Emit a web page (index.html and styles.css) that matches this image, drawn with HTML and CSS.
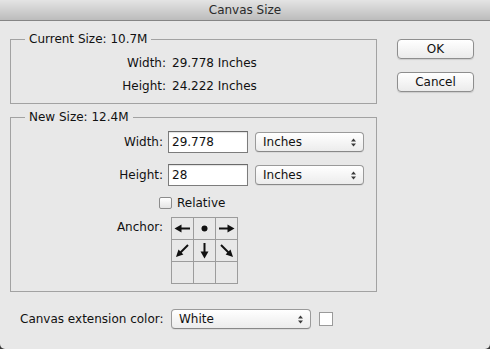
FILE: index.html
```html
<!DOCTYPE html>
<html>
<head>
<meta charset="utf-8">
<title>Canvas Size</title>
<link rel="stylesheet" href="styles.css">
</head>
<body>
<div class="window">
  <div class="titlebar">Canvas Size</div>
  <div class="content">
    <div class="main">
      <div class="left">
        <fieldset class="group group-current">
          <legend>Current Size: 10.7M</legend>
          <div class="info-grid">
            <span class="lbl">Width:</span><span>29.778 Inches</span>
            <span class="lbl">Height:</span><span>24.222 Inches</span>
          </div>
        </fieldset>
        <fieldset class="group group-new">
          <legend>New Size: 12.4M</legend>
          <div class="form-grid">
            <span class="lbl">Width:</span>
            <div class="field-row">
              <div class="textbox">29.778</div>
              <div class="popup unit"><span>Inches</span>
                <svg class="updown" width="5" height="9" viewBox="0 0 5 9"><polygon points="0,3.5 2.5,0.5 5,3.5"/><polygon points="0,5.5 2.5,8.5 5,5.5"/></svg>
              </div>
            </div>
            <span class="lbl">Height:</span>
            <div class="field-row">
              <div class="textbox">28</div>
              <div class="popup unit"><span>Inches</span>
                <svg class="updown" width="5" height="9" viewBox="0 0 5 9"><polygon points="0,3.5 2.5,0.5 5,3.5"/><polygon points="0,5.5 2.5,8.5 5,5.5"/></svg>
              </div>
            </div>
          </div>
          <div class="relative-row"><span class="checkbox"></span><span>Relative</span></div>
          <div class="anchor-row">
            <span class="lbl">Anchor:</span>
            <div class="anchor-grid">
              <div class="cell"><svg width="21" height="21" viewBox="0 0 21 21"><polygon points="2.5,10.5 9.5,6.5 9.5,14.5"/><rect x="9" y="9.5" width="9" height="2"/></svg></div>
              <div class="cell"><svg width="21" height="21" viewBox="0 0 21 21"><circle cx="10.5" cy="10.5" r="3"/></svg></div>
              <div class="cell"><svg width="21" height="21" viewBox="0 0 21 21"><polygon points="18.5,10.5 11.5,6.5 11.5,14.5"/><rect x="3" y="9.5" width="9" height="2"/></svg></div>
              <div class="cell"><svg width="21" height="21" viewBox="0 0 21 21"><polygon points="4,17 11.4,14.5 6.5,9.6"/><line x1="16" y1="5" x2="8.5" y2="12.5" stroke="#111" stroke-width="2"/></svg></div>
              <div class="cell"><svg width="21" height="21" viewBox="0 0 21 21"><rect x="9.5" y="3" width="2" height="10"/><polygon points="10.5,18.5 6.5,11.5 14.5,11.5"/></svg></div>
              <div class="cell"><svg width="21" height="21" viewBox="0 0 21 21"><polygon points="17,17 9.6,14.5 14.5,9.6"/><line x1="5" y1="5" x2="12.5" y2="12.5" stroke="#111" stroke-width="2"/></svg></div>
              <div class="cell"></div>
              <div class="cell"></div>
              <div class="cell"></div>
            </div>
          </div>
        </fieldset>
      </div>
      <div class="buttons">
        <div class="btn">OK</div>
        <div class="btn">Cancel</div>
      </div>
    </div>
    <div class="ext-row">
      <span class="ext-label">Canvas extension color:</span>
      <div class="popup ext-popup"><span>White</span>
        <svg class="updown" width="5" height="9" viewBox="0 0 5 9"><polygon points="0,3.5 2.5,0.5 5,3.5"/><polygon points="0,5.5 2.5,8.5 5,5.5"/></svg>
      </div>
      <span class="swatch"></span>
    </div>
  </div>
</div>
</body>
</html>
```
FILE: styles.css
```css
html, body {
  margin: 0;
  background: #3a3a3a;
}
body {
  font-family: "DejaVu Sans", sans-serif;
  font-size: 12px;
  color: #111;
}
.window {
  width: 490px;
  height: 349px;
  background: #e8e8e8;
  border-radius: 0 0 5px 5px;
  overflow: hidden;
}
.titlebar {
  height: 20px;
  border-bottom: 1px solid #858585;
  background: linear-gradient(#e4e4e4, #bcbcbc);
  text-align: center;
  line-height: 21px;
  color: #2a2a2a;
}
.content {
  padding-left: 10px;
}
.main {
  display: flex;
  gap: 20px;
}
.left {
  width: 367px;
  display: flex;
  flex-direction: column;
}
fieldset.group {
  margin: 0;
  border: 1px solid #a2a2a2;
  min-width: 0;
}
legend {
  margin-left: 14px;
  padding: 0 4px;
  line-height: 15px;
}
.group-current {
  margin-top: 11px !important;
  padding: 4px 0 6px;
}
.info-grid {
  display: grid;
  grid-template-columns: 155px auto;
  column-gap: 6px;
  grid-auto-rows: 23px;
  align-items: center;
}
.lbl {
  text-align: right;
}
.group-new {
  margin-top: 6px !important;
  padding: 6px 0 7px;
}
.form-grid {
  display: grid;
  grid-template-columns: 152px auto;
  column-gap: 5px;
  row-gap: 11px;
  align-items: center;
}
.field-row {
  display: flex;
  align-items: center;
  gap: 7px;
}
.textbox {
  box-sizing: border-box;
  width: 80px;
  height: 22px;
  border: 1px solid #7c7c7c;
  border-top-color: #6a6a6a;
  background: #fff;
  padding-left: 3px;
  line-height: 20px;
  box-shadow: inset 0 1px 1px rgba(0, 0, 0, 0.12);
}
.popup {
  box-sizing: border-box;
  height: 20px;
  border: 1px solid #9a9a9a;
  border-bottom-color: #888;
  border-radius: 4px;
  background: linear-gradient(#ffffff, #ececec);
  display: flex;
  align-items: center;
  justify-content: space-between;
  padding: 0 7px 0 7px;
  box-shadow: 0 1px 0 rgba(0, 0, 0, 0.06);
}
.updown {
  display: block;
  fill: #3a3a3a;
}
.unit {
  width: 109px;
}
.relative-row {
  display: flex;
  align-items: center;
  gap: 5px;
  height: 16px;
  margin-top: 9px;
  padding-left: 148px;
}
.checkbox {
  box-sizing: border-box;
  width: 13px;
  height: 12px;
  border: 1px solid #8c8c8c;
  border-radius: 2px;
  background: linear-gradient(#ffffff, #e4e4e4);
}
.anchor-row {
  display: grid;
  grid-template-columns: 152px auto;
  column-gap: 8px;
  margin-top: 6px;
  align-items: start;
}
.anchor-row .lbl {
  line-height: 21px;
}
.anchor-grid {
  display: grid;
  grid-template-columns: repeat(3, 21px);
  grid-auto-rows: 21px;
  gap: 1px;
  padding: 1px;
  background: #9c9c9c;
  width: max-content;
}
.cell {
  background: #e8e8e8;
}
.cell svg {
  display: block;
  fill: #111;
}
.ext-row {
  display: flex;
  align-items: center;
  margin-top: 17px;
  padding-left: 10px;
  height: 20px;
}
.ext-label {
  width: 151px;
}
.ext-popup {
  width: 140px;
}
.swatch {
  box-sizing: border-box;
  width: 14px;
  height: 14px;
  border: 1px solid #9a9a9a;
  background: #fff;
  margin-left: 8px;
}
.buttons {
  display: flex;
  flex-direction: column;
  gap: 13px;
  margin-top: 18px;
}
.btn {
  box-sizing: border-box;
  width: 77px;
  height: 20px;
  border: 1px solid #8e8e8e;
  border-radius: 4px;
  background: linear-gradient(#ffffff, #ebebeb);
  text-align: center;
  line-height: 18px;
  box-shadow: 0 1px 1px rgba(0, 0, 0, 0.12);
}
```
